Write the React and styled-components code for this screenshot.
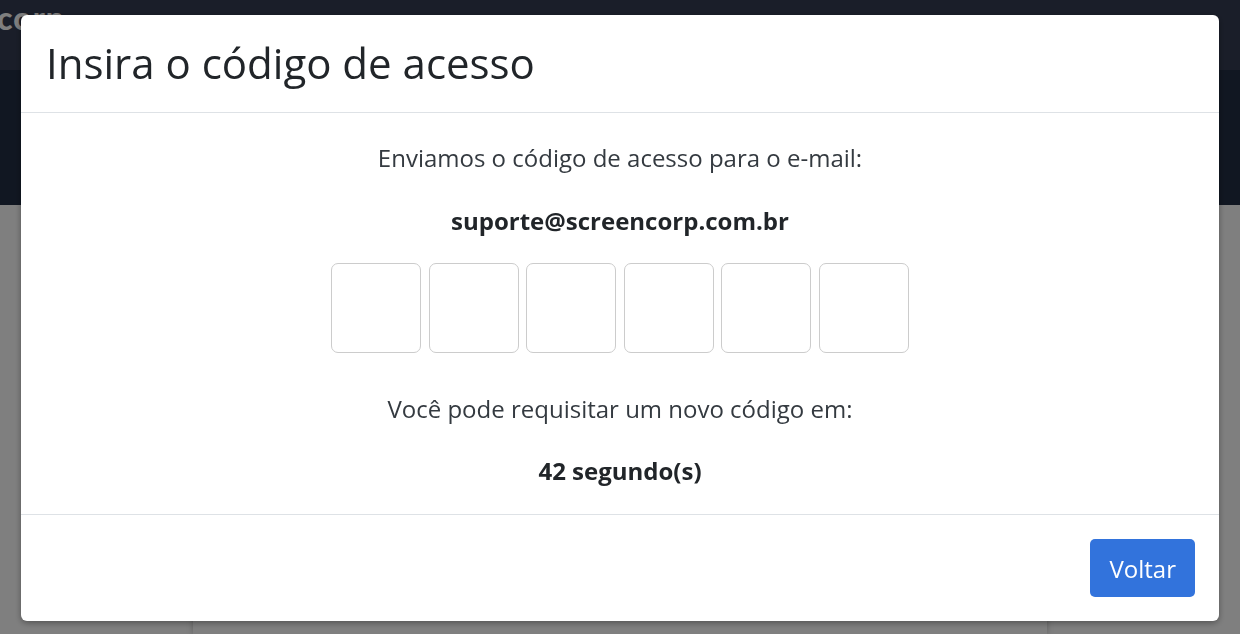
import styled, { createGlobalStyle } from 'styled-components';

const GlobalStyle = createGlobalStyle`
    html, body {
        margin: 0;
        padding: 0;
        height: 100%;
        overflow: hidden;
    }
    body {
        font-family: "Open Sans", "Liberation Sans", sans-serif;
        background: #fefefe;
    }
`;

const Page = styled.div`
    height: 634px;
    display: flex;
    flex-direction: column;
`;

const TopBar = styled.header`
    height: 70px;
    background: #353d53;
    display: flex;
    align-items: flex-start;
`;

const Logo = styled.div`
    font-family: "Lato", "Liberation Sans", sans-serif;
    font-weight: 900;
    font-size: 32px;
    line-height: 32px;
    color: #ffffff;
    margin: 2px 0 0 -3px;
    letter-spacing: 1px;
`;

const SubBar = styled.div`
    height: 135px;
    background: #232f45;
`;

const Content = styled.main`
    flex: 1;
    display: flex;
    justify-content: center;
    padding-top: 20px;
`;

const Card = styled.div`
    width: 854px;
    background: #ffffff;
    box-shadow: 0 0 6px rgba(0, 0, 0, 0.25);
`;

const Backdrop = styled.div`
    position: fixed;
    inset: 0;
    background: rgba(0, 0, 0, 0.5);
    display: flex;
    align-items: flex-start;
    justify-content: center;
    padding-top: 15px;
`;

const Modal = styled.div`
    width: 1198px;
    background: #ffffff;
    border-radius: 6px;
    box-shadow: 0 2px 6px rgba(0, 0, 0, 0.35);
    display: flex;
    flex-direction: column;
`;

const ModalHeader = styled.div`
    height: 98px;
    box-sizing: border-box;
    padding: 0 25px;
    display: flex;
    align-items: center;
    border-bottom: 1px solid #dee2e6;
`;

const Title = styled.h2`
    margin: 0;
    font-weight: 400;
    font-size: 42px;
    color: #212529;
    line-height: 1.2;
`;

const ModalBody = styled.div`
    padding: 27px 24px 25px;
    display: flex;
    flex-direction: column;
    align-items: center;
`;

const Text = styled.p`
    margin: 0;
    margin-top: ${(p) => p.$top || 0}px;
    font-size: 24px;
    line-height: 36px;
    font-weight: ${(p) => (p.$bold ? 700 : 400)};
    color: ${(p) => (p.$bold ? '#212529' : '#343a40')};
`;

const CodeRow = styled.div`
    display: flex;
    gap: 7.6px;
    margin: 24px 0 38px;
`;

const CodeBox = styled.input`
    width: 90px;
    height: 90px;
    box-sizing: border-box;
    border: 1px solid #cccccc;
    border-radius: 7px;
    background: #ffffff;
    font-family: inherit;
    font-size: 32px;
    text-align: center;
    outline: none;
`;

const ModalFooter = styled.div`
    border-top: 1px solid #dee2e6;
    padding: 24px;
    display: flex;
    justify-content: flex-end;
`;

const Button = styled.button`
    height: 58px;
    padding: 0 19px;
    border: none;
    border-radius: 5px;
    background: #3273dc;
    color: #ffffff;
    font-family: inherit;
    font-size: 24px;
    cursor: pointer;
`;

export default function App() {
    return (
        <>
            <GlobalStyle />
            <Page>
                <TopBar>
                    <Logo>corp</Logo>
                </TopBar>
                <SubBar />
                <Content>
                    <Card />
                </Content>
            </Page>

            <Backdrop>
                <Modal>
                    <ModalHeader>
                        <Title>Insira o código de acesso</Title>
                    </ModalHeader>

                    <ModalBody>
                        <Text>Enviamos o código de acesso para o e-mail:</Text>
                        <Text $bold $top={27}>suporte@screencorp.com.br</Text>

                        <CodeRow>
                            {[0, 1, 2, 3, 4, 5].map((i) => (
                                <CodeBox key={i} maxLength={1} />
                            ))}
                        </CodeRow>

                        <Text>Você pode requisitar um novo código em:</Text>
                        <Text $bold $top={26}>42 segundo(s)</Text>
                    </ModalBody>

                    <ModalFooter>
                        <Button>Voltar</Button>
                    </ModalFooter>
                </Modal>
            </Backdrop>
        </>
    );
}
